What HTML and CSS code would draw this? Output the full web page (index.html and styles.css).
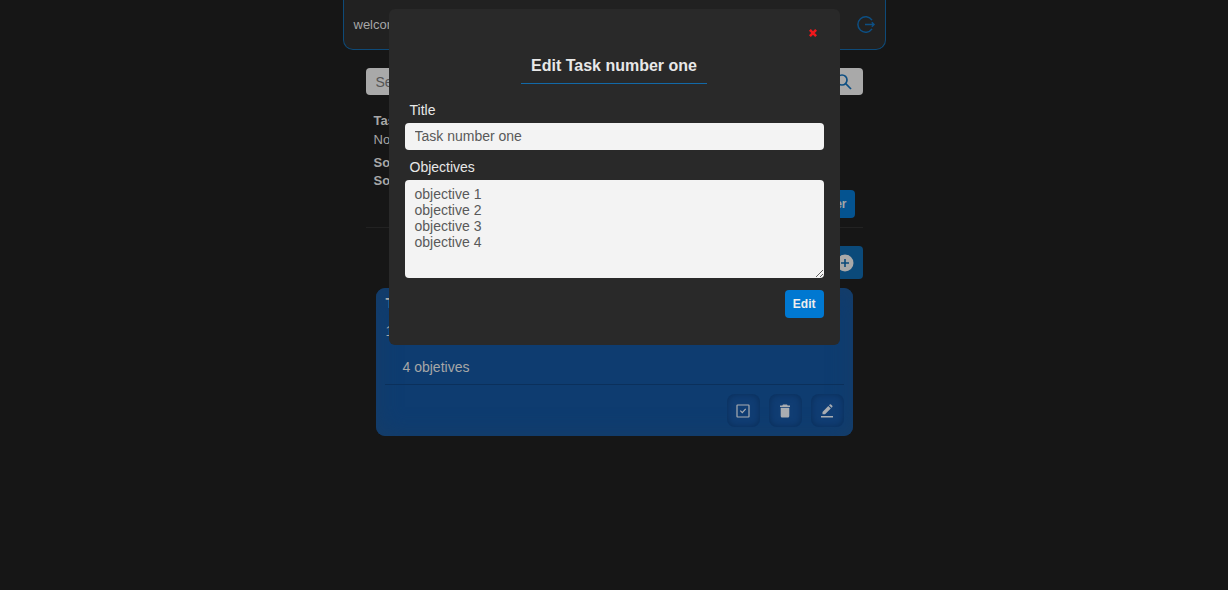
FILE: index.html
```html
<!DOCTYPE html>
<html lang="en">
<head>
<meta charset="utf-8">
<meta name="viewport" content="width=device-width, initial-scale=1">
<title>Tasks</title>
<link rel="stylesheet" href="styles.css">
</head>
<body>
<div class="app">
  <header class="topbar">
    <span class="welcome">welcome</span>
    <button class="icon-button logout" type="button" aria-label="Log out">
      <svg width="20" height="20" viewBox="0 0 20 20" fill="none" stroke="currentColor" stroke-width="1.5"><path d="M16 5.200A7.700 7.700 0 1 0 16 13.800M9 9.500h9M15.800 7.300 18 9.500l-2.200 2.200"/></svg>
    </button>
  </header>
  <main class="content">
    <form class="search">
      <input class="search-input" type="search" placeholder="Search" aria-label="Search">
      <button class="icon-button search-button" type="button" aria-label="Search">
        <svg width="18" height="18" viewBox="0 0 18 18" fill="none" stroke="currentColor" stroke-width="1.7"><circle cx="7" cy="7" r="5"/><path d="M10.7 10.7 16 16"/></svg>
      </button>
    </form>
    <section class="filters">
      <div class="summary">
        <strong>Tasks</strong>
        <span>None</span>
      </div>
      <div class="sorting">
        <strong>Sort</strong>
        <strong>Sort</strong>
      </div>
      <button class="button filter-button" type="button">Filter</button>
    </section>
    <div class="add-row">
      <button class="add-button" type="button" aria-label="Add task">
        <svg width="18" height="18" viewBox="0 0 18 18"><circle cx="9" cy="9" r="8.5" fill="currentColor"/><path d="M9 5v8M5 9h8" stroke="#0b4a7a" stroke-width="1.6"/></svg>
      </button>
    </div>
    <article class="card">
      <h2 class="card-title">Task</h2>
      <p class="card-number">1</p>
      <p class="card-count">4 objetives</p>
      <div class="card-actions">
        <button class="action" type="button" aria-label="Complete">
          <svg width="14" height="14" viewBox="0 0 14 14" fill="none" stroke="currentColor" stroke-width="1.2"><rect x="1" y="1" width="12" height="12" rx=".5"/><path d="m4.300 6.700 2 2L9.700 4.800"/></svg>
        </button>
        <button class="action" type="button" aria-label="Delete">
          <svg width="14" height="14" viewBox="0 0 14 14" fill="currentColor"><path d="M5 .5h4l.7 1h2.300V3H2V1.500h2.300zM2.700 3.700h8.600v8.300c0 .8-.6 1.500-1.400 1.500H4.100c-.8 0-1.400-.7-1.400-1.500z"/></svg>
        </button>
        <button class="action" type="button" aria-label="Edit task">
          <svg width="14" height="14" viewBox="0 0 14 14" fill="currentColor"><path d="M2.500 7.900 8.300 2l2.500 2.500L5 10.300H2.500zM9 1.300 9.800.5q.6-.5 1.200 0l1.300 1.300q.5.600 0 1.200l-.8.800zM1 12h12v1.400H1z"/></svg>
        </button>
      </div>
    </article>
  </main>
</div>
<div class="overlay">
  <div class="modal" role="dialog" aria-modal="true" aria-labelledby="modal-title">
    <button class="close" type="button" aria-label="Close">
      <svg width="8" height="8" viewBox="0 0 8 8" stroke="currentColor" stroke-width="2.6"><path d="m.9.900 6.200 6.200M7.100.900.900 7.100"/></svg>
    </button>
    <h1 class="modal-title" id="modal-title">Edit Task number one</h1>
    <form class="modal-form">
      <label class="label" for="title">Title</label>
      <input class="field" id="title" type="text" value="Task number one">
      <label class="label" for="objectives">Objectives</label>
      <textarea class="field field-area" id="objectives">objective 1
objective 2
objective 3
objective 4</textarea>
      <button class="button submit" type="button">Edit</button>
    </form>
  </div>
</div>
</body>
</html>
```
FILE: styles.css
```css
* {
  box-sizing: border-box;
}

body {
  margin: 0;
  min-height: 100vh;
  background: #161616;
  color: #a7a7a7;
  font: 14px/16px "Liberation Sans", Arial, sans-serif;
}

button {
  padding: 0;
  border: 0;
  font: inherit;
  cursor: pointer;
}

svg {
  display: block;
}

h1,
h2,
p {
  margin: 0;
}

.app {
  width: 100%;
  max-width: 543px;
  margin: 0 auto;
}

.topbar {
  display: flex;
  align-items: center;
  justify-content: space-between;
  height: 50px;
  padding: 0 9px 0 10px;
  border: 1px solid #0e4a78;
  border-top: 0;
  border-radius: 0 0 10px 10px;
  background: #212121;
}

.welcome {
  font-size: 13px;
}

.icon-button {
  background: transparent;
  color: #0d4f83;
}

.content {
  padding: 18px 23px;
}

.search {
  display: flex;
  align-items: center;
  height: 27px;
  padding-right: 10px;
  border-radius: 4px;
  background: #a9a9a9;
}

.search-input {
  flex: 1;
  min-width: 0;
  padding: 0 10px;
  border: 0;
  background: transparent;
  font: inherit;
}

.search-input::placeholder {
  color: #555;
}

.filters {
  display: flex;
  flex-direction: column;
  padding: 18px 8px 9px;
  border-bottom: 1px solid #222;
  font-size: 13px;
}

.summary,
.sorting {
  display: flex;
  flex-direction: column;
  gap: 2px;
}

.sorting {
  margin-top: 7px;
}

.summary {
  gap: 3px;
}

.button {
  align-self: flex-end;
  height: 28px;
  padding: 0 8px;
  border-radius: 4px;
  background: #0078d1;
  color: #eee;
  font-size: 12px;
  font-weight: bold;
}

.filter-button {
  margin-top: 1px;
  background: #045390;
  color: #a7a7a7;
}

.add-row {
  display: flex;
  justify-content: flex-end;
  padding-top: 18px;
}

.add-button {
  height: 33px;
  padding: 0 9px;
  border-radius: 4px;
  background: #0b4a7a;
  color: #a9a9a9;
}

.card {
  margin: 9px 10px 0;
  padding: 7px 9px 9px;
  border-radius: 9px;
  background: #0e3c70;
  box-shadow: inset 0 0 24px #173d66;
}

.card-title,
.card-number {
  padding-left: 1px;
}

.card-title {
  font-size: 14px;
}

.card-number {
  margin-top: 12px;
}

.card-count {
  padding: 20px 18px 9px;
  border-bottom: 1px solid #0b305b;
}

.card-actions {
  display: flex;
  justify-content: flex-end;
  gap: 9px;
  padding-top: 9px;
}

.action {
  display: grid;
  place-items: center;
  width: 33px;
  height: 33px;
  border-radius: 8px;
  background: #103d73;
  box-shadow: inset 0 0 7px #092c56;
  color: #a9adb2;
}

.overlay {
  position: fixed;
  inset: 0;
  display: flex;
  align-items: flex-start;
  justify-content: center;
  padding-top: 9px;
}

.modal {
  display: flex;
  flex-direction: column;
  width: 100%;
  max-width: 451px;
  padding: 20px 16px 27px;
  border-radius: 6px;
  background: #292929;
  color: #e8e8e8;
}

.close {
  align-self: flex-end;
  margin-right: 7px;
  background: transparent;
  color: #f0181c;
}

.modal-title {
  align-self: center;
  margin-top: 19px;
  padding: 0 10px 7px;
  border-bottom: 1px solid #1269a8;
  font-size: 16px;
  line-height: 20px;
}

.modal-form {
  display: flex;
  flex-direction: column;
  margin-top: 18px;
}

.label {
  margin: 0 5px 5px;
}

.field {
  height: 27px;
  margin-bottom: 9px;
  padding: 0 10px 1px;
  border: 0;
  border-radius: 4px;
  background: #f3f3f3;
  color: #595959;
  font: 14px/16px "Liberation Sans", Arial, sans-serif;
}

.field-area {
  height: 98px;
  margin-bottom: 12px;
  padding-top: 6px;
  resize: vertical;
}
```
